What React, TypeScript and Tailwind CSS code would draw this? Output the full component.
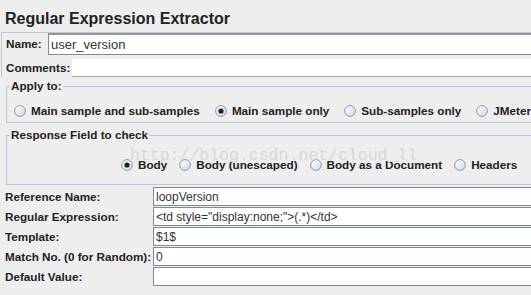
import React from "react";

const Radio = ({ checked, label }: { checked?: boolean; label: string }) => (
  <div className="flex items-center shrink-0">
    <svg width="12" height="12" viewBox="0 0 12 12" className="mr-[5px]">
      <defs>
        <linearGradient id="rg" x1="0" y1="0" x2="1" y2="1">
          <stop offset="0" stopColor="#ffffff" />
          <stop offset="1" stopColor="#c9d6e3" />
        </linearGradient>
      </defs>
      <circle cx="6" cy="6" r="5.4" fill="url(#rg)" stroke="#8b9aaa" strokeWidth="1" />
      {checked && <circle cx="6" cy="6" r="2.6" fill="#222" />}
    </svg>
    <span className="whitespace-nowrap">{label}</span>
  </div>
);

const FieldRow = ({ label, value }: { label: string; value?: string }) => (
  <div className="flex items-center h-[19px]">
    <div className="w-[153px] pl-[5px] shrink-0 font-bold text-[11.7px] whitespace-nowrap">
      {label}
    </div>
    <div className="flex-1 h-full bg-white border border-[#7a8a99] border-r-0 flex items-center pl-[2px] text-[12px] font-normal text-[#333]">
      {value}
    </div>
  </div>
);

export default function App() {
  return (
    <div
      className="relative w-[531px] h-[295px] overflow-hidden bg-[#eeeeee] text-[#222]"
      style={{ fontFamily: '"Liberation Sans", Arial, sans-serif' }}
    >
      {/* Title */}
      <div className="mt-[9px] pl-[5px] h-[20px] leading-[20px] text-[16px] font-bold text-[#222]">
        Regular Expression Extractor
      </div>

      {/* Name / Comments */}
      <div className="mt-[3px] ml-[1px] border-l border-t border-[#c6c6c6]">
        <div className="flex items-center h-[22px]">
          <div className="w-[46px] pl-[4px] font-bold text-[11.7px] shrink-0">Name:</div>
          <div className="flex-1 h-full bg-white border border-[#7a8a99] border-r-0 border-t-2 border-t-[#8a96a2] flex items-center pl-[2px] text-[13px] text-[#333]">
            user_version
          </div>
        </div>
        <div className="flex items-center h-[18px] mt-[4px]">
          <div className="w-[70px] pl-[4px] font-bold text-[11.7px] shrink-0">Comments:</div>
          <div className="flex-1 h-full bg-white border-b border-[#a8a8a8]" />
        </div>
      </div>

      {/* Apply to */}
      <fieldset className="mt-[2px] ml-[6px] w-[560px] border border-[#b8c8d8]">
        <legend className="ml-[3px] px-[1px] leading-[14px] font-bold text-[11.7px]">Apply to:</legend>
        <div className="pt-[8px] pb-[1px] pl-[7px] h-[29px] flex items-center gap-[15px] font-bold text-[11.7px]">
          <Radio label="Main sample and sub-samples" />
          <Radio checked label="Main sample only" />
          <Radio label="Sub-samples only" />
          <Radio label="JMeter Variable" />
        </div>
      </fieldset>

      {/* Response field */}
      <fieldset className="mt-[5px] ml-[6px] w-[560px] border border-[#b8c8d8]">
        <legend className="ml-[3px] px-[1px] leading-[14px] font-bold text-[11.7px]">Response Field to check</legend>
        <div className="pt-[13px] pb-[9px] pl-[114px] font-bold text-[11.7px]">
          <div className="h-[20px] flex items-center gap-[12px]">
            <Radio checked label="Body" />
            <Radio label="Body (unescaped)" />
            <Radio label="Body as a Document" />
            <Radio label="Headers" />
          </div>
        </div>
      </fieldset>

      {/* Extractor fields */}
      <div className="mt-[2px] flex flex-col gap-[1px]">
        <FieldRow label="Reference Name:" value="loopVersion" />
        <FieldRow label="Regular Expression:" value={'<td style="display:none;">(.*)</td>'} />
        <FieldRow label="Template:" value="$1$" />
        <FieldRow label="Match No. (0 for Random):" value="0" />
        <FieldRow label="Default Value:" />
      </div>

      {/* watermark */}
      <div
        className="absolute left-[130px] top-[147px] text-[16.5px] leading-[18px] text-[#d8d8d8] pointer-events-none whitespace-nowrap"
        style={{ fontFamily: '"Liberation Mono", "Courier New", monospace' }}
      >
        http://blog.csdn.net/cloud_ll
      </div>
    </div>
  );
}
